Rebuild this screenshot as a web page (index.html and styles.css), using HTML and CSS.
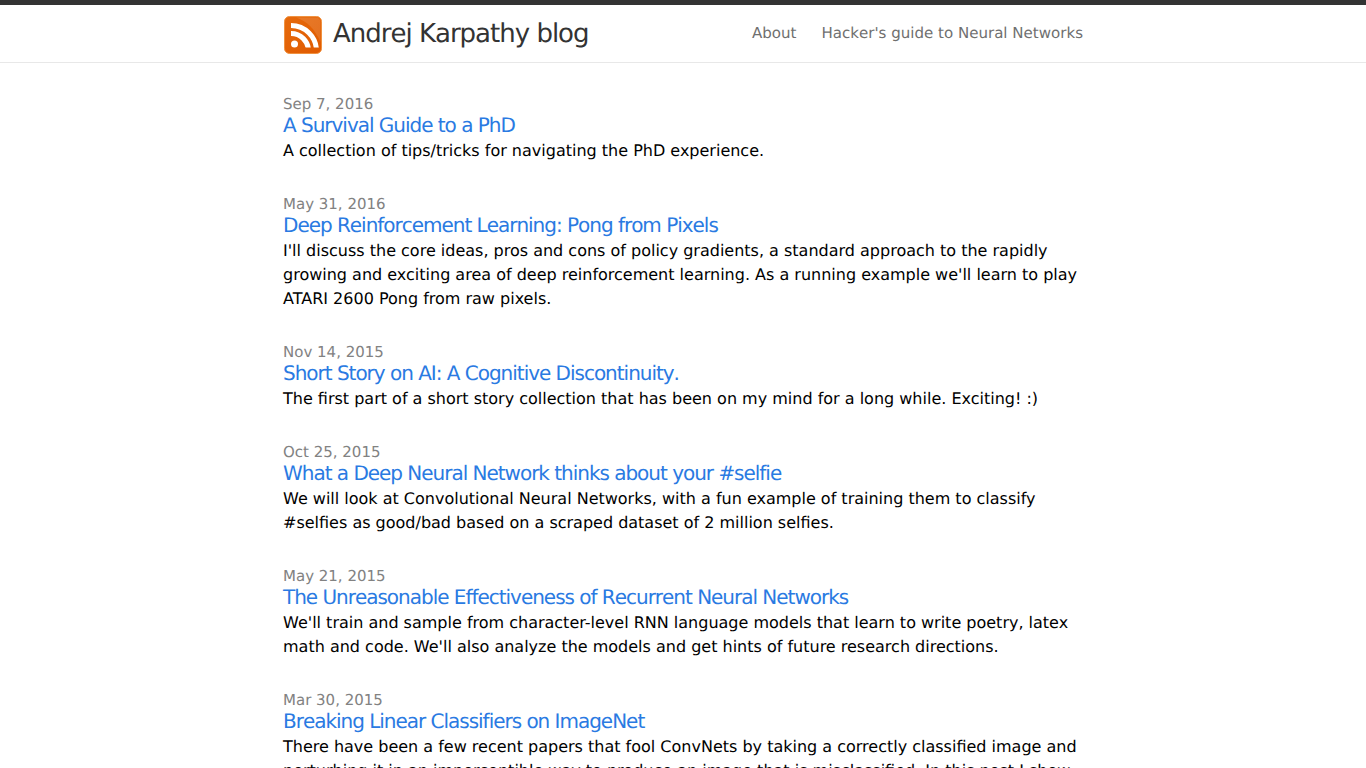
FILE: index.html
```html
<!DOCTYPE html>
<html lang="en">
<head>
<meta charset="utf-8">
<title>Andrej Karpathy blog</title>
<link rel="stylesheet" href="styles.css">
</head>
<body>
<header class="site-header">
  <div class="wrapper header-row">
    <a class="brand" href="#">
      <svg class="rss" width="38" height="38" viewBox="0 0 38 38" aria-hidden="true">
        <defs>
          <linearGradient id="rssbg" x1="0" y1="0" x2="1" y2="1">
            <stop offset="0" stop-color="#e66a0c"/>
            <stop offset="1" stop-color="#e05a00"/>
          </linearGradient>
          <clipPath id="rssclip">
            <rect x="7" y="0" width="31" height="31.500"/>
          </clipPath>
        </defs>
        <rect x="0.5" y="0.500" width="37" height="37" rx="5" fill="url(#rssbg)" stroke="#f0913f" stroke-width="1"/>
        <path d="M12 1.500H32a4.500 4.500 0 0 1 4.500 4.500V26C30 12 24 6 12 1.500Z" fill="#fff" opacity="0.12"/>
        <circle cx="10.500" cy="28" r="3.500" fill="#fff"/>
        <g clip-path="url(#rssclip)" fill="none" stroke="#fff" stroke-width="5">
          <circle cx="7" cy="35" r="17.500"/>
          <circle cx="7" cy="35" r="25.500"/>
        </g>
      </svg>
      <span class="site-title">Andrej Karpathy blog</span>
    </a>
    <nav class="site-nav">
      <a href="#">About</a>
      <a href="#">Hacker's guide to Neural Networks</a>
    </nav>
  </div>
</header>
<main class="wrapper posts">
  <article class="post">
    <div class="date">Sep 7, 2016</div>
    <a class="post-title" href="#">A Survival Guide to a PhD</a>
    <p class="excerpt">A collection of tips/tricks for navigating the PhD experience.</p>
  </article>
  <article class="post">
    <div class="date">May 31, 2016</div>
    <a class="post-title" href="#">Deep Reinforcement Learning: Pong from Pixels</a>
    <p class="excerpt">I'll discuss the core ideas, pros and cons of policy gradients, a standard approach to the rapidly growing and exciting area of deep reinforcement learning. As a running example we'll learn to play ATARI 2600 Pong from raw pixels.</p>
  </article>
  <article class="post">
    <div class="date">Nov 14, 2015</div>
    <a class="post-title" href="#">Short Story on AI: A Cognitive Discontinuity.</a>
    <p class="excerpt">The first part of a short story collection that has been on my mind for a long while. Exciting! :)</p>
  </article>
  <article class="post">
    <div class="date">Oct 25, 2015</div>
    <a class="post-title" href="#">What a Deep Neural Network thinks about your #selfie</a>
    <p class="excerpt">We will look at Convolutional Neural Networks, with a fun example of training them to classify #selfies as good/bad based on a scraped dataset of 2 million selfies.</p>
  </article>
  <article class="post">
    <div class="date">May 21, 2015</div>
    <a class="post-title" href="#">The Unreasonable Effectiveness of Recurrent Neural Networks</a>
    <p class="excerpt">We'll train and sample from character-level RNN language models that learn to write poetry, latex math and code. We'll also analyze the models and get hints of future research directions.</p>
  </article>
  <article class="post">
    <div class="date">Mar 30, 2015</div>
    <a class="post-title" href="#">Breaking Linear Classifiers on ImageNet</a>
    <p class="excerpt">There have been a few recent papers that fool ConvNets by taking a correctly classified image and perturbing it in an imperceptible way to produce an image that is misclassified. In this post I show how these results come from the linear nature of the models.</p>
  </article>
</main>
</body>
</html>
```

FILE: styles.css
```css
* {
  box-sizing: border-box;
}

html,
body {
  margin: 0;
  padding: 0;
}

body {
  font-family: "DejaVu Sans", sans-serif;
  font-size: 16px;
  line-height: 24px;
  color: #000;
  background: #fff;
  text-rendering: geometricPrecision;
}

a {
  text-decoration: none;
}

.wrapper {
  width: 800px;
  margin-left: 283px;
}

.site-header {
  border-top: 5px solid #333;
  border-bottom: 1px solid #e8e8e8;
  height: 63px;
}

.header-row {
  display: flex;
  justify-content: space-between;
  align-items: center;
  height: 57px;
}

.brand {
  display: flex;
  align-items: center;
  gap: 11px;
  padding-top: 2px;
}

.rss {
  display: block;
  margin: 1px 0 0 1px;
}

.site-title {
  font-size: 26px;
  line-height: 54px;
  letter-spacing: -1px;
  font-kerning: none;
  color: #333;
  margin-top: -2px;
}

.site-nav {
  display: flex;
  gap: 25px;
  line-height: 52px;
  height: 54px;
  font-size: 15.05px;
  font-kerning: none;
}

.site-nav a {
  color: #6f6f6f;
}

.posts {
  padding-top: 30px;
}

.post {
  margin-bottom: 30px;
}

.date {
  font-size: 15px;
  line-height: 22px;
  color: #828282;
}

.post-title {
  display: block;
  font-size: 20px;
  line-height: 20px;
  letter-spacing: -1.02px;
  font-kerning: none;
  color: #2a7ae2;
}

.excerpt {
  margin: 4px 0 0;
}
```
